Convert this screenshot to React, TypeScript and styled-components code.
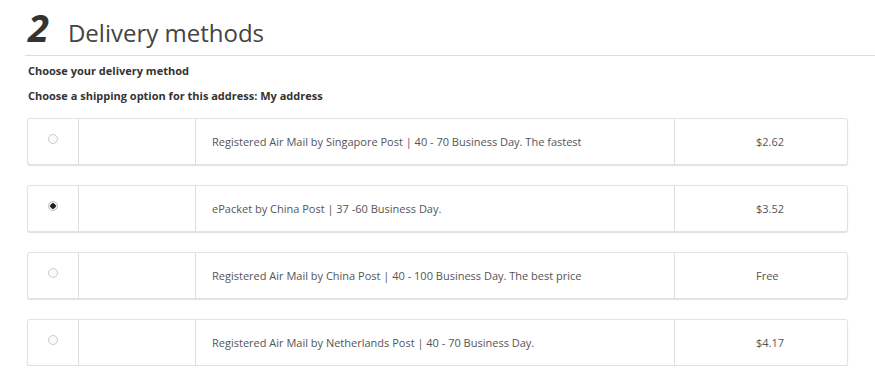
import React, { FC } from 'react';
import styled, { createGlobalStyle } from 'styled-components';

interface ShippingOption {
  id: string;
  label: string;
  price: string;
  checked: boolean;
}

const options: ShippingOption[] = [
  {
    id: 'sg',
    label: 'Registered Air Mail by Singapore Post | 40 - 70 Business Day. The fastest',
    price: '$2.62',
    checked: false,
  },
  { id: 'ep', label: 'ePacket by China Post | 37 -60 Business Day.', price: '$3.52', checked: true },
  {
    id: 'cn',
    label: 'Registered Air Mail by China Post | 40 - 100 Business Day. The best price',
    price: 'Free',
    checked: false,
  },
  {
    id: 'nl',
    label: 'Registered Air Mail by Netherlands Post | 40 - 70 Business Day.',
    price: '$4.17',
    checked: false,
  },
];

export default function App() {
  return (
    <>
      <GlobalStyle />
      <Page>
        <Heading>
          <Step>2</Step>
          <Title>Delivery methods</Title>
        </Heading>
        <Divider />
        <Label>Choose your delivery method</Label>
        <Label>Choose a shipping option for this address: My address</Label>
        <Options>
          {options.map((o) => (
            <OptionRow key={o.id} option={o} />
          ))}
        </Options>
      </Page>
    </>
  );
}

const OptionRow: FC<{ option: ShippingOption }> = ({ option }) => (
  <Row>
    <RadioCell>
      <Radio $checked={option.checked} />
    </RadioCell>
    <LogoCell />
    <NameCell>{option.label}</NameCell>
    <PriceCell>{option.price}</PriceCell>
  </Row>
);

const GlobalStyle = createGlobalStyle`
  html, body {
    margin: 0;
    padding: 0;
    background: #fff;
    font-family: 'Open Sans', 'Noto Sans', sans-serif;
    color: #333;
  }
`;

const Page = styled.div`
  padding: 5px 0 0 25px;
`;

const Heading = styled.div`
  display: flex;
  align-items: baseline;
  padding-left: 3px;
  height: 50px;
`;

const Step = styled.span`
  font-size: 38px;
  font-weight: 700;
  font-style: italic;
  color: #333;
  line-height: 45px;
  margin-right: 19px;
`;

const Title = styled.span`
  font-size: 24px;
  font-weight: 400;
  color: #444;
  line-height: 45px;
`;

const Divider = styled.div`
  height: 1px;
  background: #ddd;
  margin-bottom: 7px;
`;

const Label = styled.div`
  font-size: 11px;
  font-weight: 700;
  color: #333;
  line-height: 15px;
  padding-left: 3px;
  margin-bottom: 10px;
`;

const Options = styled.div`
  display: flex;
  flex-direction: column;
  gap: 20px;
  margin: 15px 0 0 2px;
  width: 821px;
`;

const Row = styled.div`
  display: flex;
  height: 47px;
  box-sizing: border-box;
  border: 1px solid #e2e2e2;
  border-radius: 3px;
  box-shadow: 0 1px 1px rgba(0, 0, 0, 0.12);
  background: #fff;
`;

const Cell = styled.div`
  display: flex;
  align-items: center;
  box-sizing: border-box;
  font-size: 11px;
  color: #555;
  & + & {
    border-left: 1px solid #ddd;
  }
`;

const RadioCell = styled(Cell)`
  width: 50px;
  justify-content: center;
  align-items: flex-start;
  padding-top: 15px;
`;

const LogoCell = styled(Cell)`
  width: 117px;
`;

const NameCell = styled(Cell)`
  width: 479px;
  padding-left: 16px;
`;

const PriceCell = styled(Cell)`
  flex: 1;
  padding-left: 81px;
`;

const Radio = styled.span<{ $checked: boolean }>`
  width: 10px;
  height: 10px;
  border-radius: 50%;
  box-sizing: border-box;
  border: 1px solid ${(p) => (p.$checked ? '#bbb' : '#ccc')};
  background: ${(p) =>
    p.$checked ? 'radial-gradient(circle, #222 0 2.5px, #f4f4f4 3px)' : '#fafafa'};
`;
